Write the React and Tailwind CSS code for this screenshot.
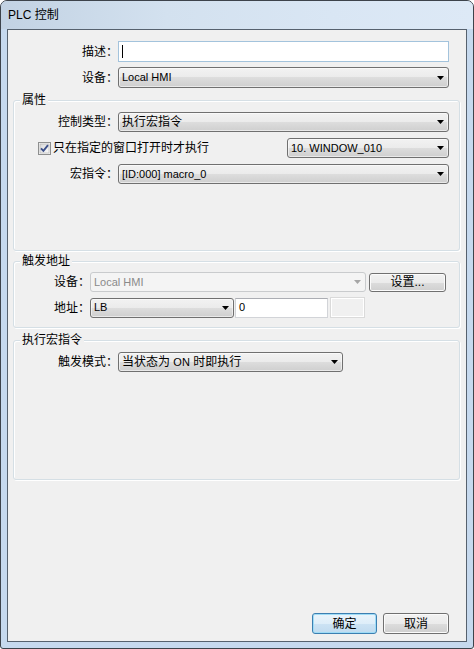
import React from 'react';

// Win7 style "PLC 控制" dialog

const Arrow = ({ disabled }) => (
  <svg width="7" height="4" viewBox="0 0 7 4" className="shrink-0">
    <path d="M0 0H7L3.5 4Z" fill={disabled ? '#a6a6a6' : '#000'} />
  </svg>
);

const Combo = ({ value, className = '', disabled, size = 'text-[12px]' }) => (
  <div
    className={`flex h-[20px] items-center justify-between rounded-[3px] border pl-[3px] pr-[4px] ${
      disabled
        ? 'border-[#c9cbcd] bg-[#f4f4f4] text-[#8a8a8a]'
        : 'border-[#707070] bg-[linear-gradient(to_bottom,#f2f2f2_0%,#ebebeb_50%,#dddddd_50%,#cfcfcf_100%)] text-black shadow-[inset_0_0_0_1px_rgba(255,255,255,0.55)]'
    } ${className}`}
  >
    <span className={`${size} whitespace-nowrap leading-none`}>{value}</span>
    <Arrow disabled={disabled} />
  </div>
);

const Button = ({ children, className = '', primary }) => (
  <div
    className={`flex items-center justify-center rounded-[3px] border text-[12px] leading-none text-black ${
      primary
        ? 'border-[#3c7fb1] bg-[linear-gradient(to_bottom,#eaf4fb_0%,#deeef9_50%,#cde3f4_50%,#c0dbef_100%)] shadow-[inset_0_0_0_1px_#9fdcf6]'
        : 'border-[#707070] bg-[linear-gradient(to_bottom,#f2f2f2_0%,#ebebeb_50%,#dddddd_50%,#cfcfcf_100%)] shadow-[inset_0_0_0_1px_#fbfbfb]'
    } ${className}`}
  >
    {children}
  </div>
);

const Group = ({ title, className = '', children }) => (
  <div
    className={`relative ml-[5px] mr-[6px] rounded-[3px] border border-[#d5dfe5] shadow-[inset_1px_1px_0_#ffffff,1px_1px_0_#ffffff] ${className}`}
  >
    <span className="absolute -top-[8px] left-[6px] bg-[#f0f0f0] px-[2px] text-[12px] leading-[14px] text-black">
      {title}
    </span>
    {children}
  </div>
);

const CheckBox = () => (
  <svg width="13" height="13" viewBox="0 0 13 13" className="shrink-0">
    <defs>
      <linearGradient id="cbg" x1="0" y1="0" x2="1" y2="1">
        <stop offset="0" stopColor="#d8d8d8" />
        <stop offset="1" stopColor="#fbfbfb" />
      </linearGradient>
    </defs>
    <rect x="0.5" y="0.5" width="12" height="12" fill="#f4f4f4" stroke="#8e8f8f" />
    <rect x="2" y="2" width="9" height="9" fill="url(#cbg)" stroke="#b0b0b0" strokeWidth="0.6" />
    <path d="M3 6.3L5.4 8.8L10 3.2" fill="none" stroke="#3b4f8a" strokeWidth="1.9" />
  </svg>
);

export default function App() {
  return (
    <div className="flex h-[649px] w-[474px] flex-col rounded-t-[7px] rounded-b-[3px] border border-[#3d434b] bg-[#c6d9ee] px-[6px] pb-[6px] font-['Liberation_Sans','Noto_Sans_CJK_SC',sans-serif]">
      {/* title bar */}
      <div className="-mx-[6px] flex h-[28px] items-center rounded-t-[6px] bg-[linear-gradient(to_right,#c2d2e3,#d3e1ef_35%,#d9e6f4_70%,#dde9f6)] pl-[7px]">
        <span className="text-[12px] leading-none text-black">
          PLC 控制
        </span>
      </div>

      {/* client area */}
      <div className="flex flex-1 flex-col border border-[#56616e] bg-[#f0f0f0] text-black">
        <div className="mt-[11px] flex items-center">
          <span className="w-[110px] text-right text-[12px] leading-none">描述：</span>
          <div className="flex h-[21px] w-[331px] items-center border border-[#a3c3dc] bg-white pl-[3px]">
            <span className="h-[13px] w-px bg-black" />
          </div>
        </div>

        <div className="mt-[5px] flex items-center">
          <span className="w-[110px] text-right text-[12px] leading-none">设备：</span>
          <Combo value="Local HMI" size="text-[11px]" className="h-[21px] w-[331px]" />
        </div>

        <Group title="属性" className="mt-[12px] h-[151px] pt-[11px]">
          <div className="flex items-center">
            <span className="w-[104px] text-right text-[12px] leading-none">控制类型：</span>
            <Combo value="执行宏指令" className="mr-[10px] flex-1" />
          </div>
          <div className="mt-[6px] flex items-center pl-[24px]">
            <CheckBox />
            <span className="ml-[2px] text-[12px] leading-none">只在指定的窗口打开时才执行</span>
            <Combo value="10. WINDOW_010" size="text-[11px]" className="ml-auto mr-[10px] w-[162px]" />
          </div>
          <div className="mt-[6px] flex items-center">
            <span className="w-[104px] text-right text-[12px] leading-none">宏指令：</span>
            <Combo value="[ID:000] macro_0" size="text-[11px]" className="mr-[10px] flex-1" />
          </div>
        </Group>

        <Group title="触发地址" className="mt-[10px] h-[67px] pt-[10px]">
          <div className="flex items-center">
            <span className="w-[76px] text-right text-[12px] leading-none">设备：</span>
            <Combo value="Local HMI" size="text-[11px]" disabled className="w-[276px]" />
            <Button className="ml-[3px] h-[19px] w-[77px]">设置...</Button>
          </div>
          <div className="mt-[5px] flex items-center">
            <span className="w-[76px] text-right text-[12px] leading-none">地址：</span>
            <Combo value="LB" size="text-[11px]" className="w-[144px]" />
            <div className="ml-[1px] flex h-[20px] w-[93px] items-center border border-[#d2d4d8] border-t-[#abadb3] bg-white pl-[3px] text-[11px] leading-none">
              0
            </div>
            <div className="ml-[2px] h-[21px] w-[35px] border border-[#dadada] bg-[#f0f0f0] shadow-[inset_0_0_0_1px_#ffffff]" />
          </div>
        </Group>

        <Group title="执行宏指令" className="mt-[12px] h-[140px] pt-[11px]">
          <div className="flex items-center">
            <span className="w-[104px] text-right text-[12px] leading-none">触发模式：</span>
            <Combo
              value={
                <>
                  当状态为 <span className="text-[11px]">ON</span> 时即执行
                </>
              }
              className="w-[225px]"
            />
          </div>
        </Group>

        <div className="mb-[7px] mr-[17px] mt-auto flex justify-end gap-[6px]">
          <Button primary className="h-[21px] w-[65px]">确定</Button>
          <Button className="h-[21px] w-[66px]">取消</Button>
        </div>
      </div>
    </div>
  );
}
